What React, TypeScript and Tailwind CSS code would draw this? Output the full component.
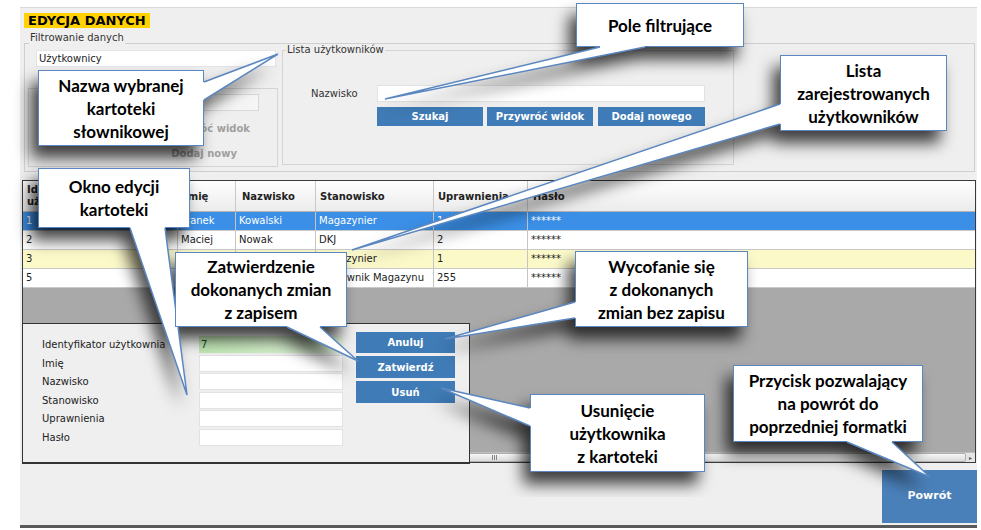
import React from 'react';

type Pt = [number, number];

interface Callout {
  lines: string[];
  box: string;
  rect: [number, number, number, number];
  tail: [Pt, Pt, Pt];
  inward: Pt;
}

const callouts: Callout[] = [
  {
    lines: ['Pole filtrujące'],
    box: 'left-[576px] top-[3px] w-[168px] h-[44px]',
    rect: [576, 3, 168, 44],
    tail: [[600, 47], [385, 99], [645, 47]],
    inward: [0, -1],
  },
  {
    lines: ['Lista', 'zarejestrowanych', 'użytkowników'],
    box: 'left-[780px] top-[55px] w-[167px] h-[76px]',
    rect: [780, 55, 167, 76],
    tail: [[780, 104], [352, 250], [780, 124]],
    inward: [1, 0],
  },
  {
    lines: ['Nazwa wybranej', 'kartoteki', 'słownikowej'],
    box: 'left-[38px] top-[70px] w-[166px] h-[76px]',
    rect: [38, 70, 166, 76],
    tail: [[204, 82], [278, 54], [204, 100]],
    inward: [-1, 0],
  },
  {
    lines: ['Okno edycji', 'kartoteki'],
    box: 'left-[38px] top-[168px] w-[152px] h-[60px]',
    rect: [38, 168, 152, 60],
    tail: [[130, 228], [187, 395], [165, 228]],
    inward: [0, -1],
  },
  {
    lines: ['Zatwierdzenie', 'dokonanych zmian', 'z zapisem'],
    box: 'left-[175px] top-[252px] w-[172px] h-[75px]',
    rect: [175, 252, 172, 75],
    tail: [[287, 327], [358, 361], [320, 327]],
    inward: [0, -1],
  },
  {
    lines: ['Wycofanie się', 'z dokonanych', 'zmian bez zapisu'],
    box: 'left-[575px] top-[251px] w-[173px] h-[76px]',
    rect: [575, 251, 173, 76],
    tail: [[575, 302], [445, 339], [575, 318]],
    inward: [1, 0],
  },
  {
    lines: ['Usunięcie', 'użytkownika', 'z kartoteki'],
    box: 'left-[530px] top-[394px] w-[175px] h-[78px]',
    rect: [530, 394, 175, 78],
    tail: [[530, 408], [441, 388], [530, 426]],
    inward: [1, 0],
  },
  {
    lines: ['Przycisk pozwalający', 'na powrót do', 'poprzedniej formatki'],
    box: 'left-[733px] top-[365px] w-[190px] h-[77px]',
    rect: [733, 365, 190, 77],
    tail: [[847, 442], [930, 477], [892, 442]],
    inward: [0, -1],
  },
];

const rows = [
  { id: '1', imie: 'Franek', nazwisko: 'Kowalski', stan: 'Magazynier', upr: '1', kind: 'sel' },
  { id: '2', imie: 'Maciej', nazwisko: 'Nowak', stan: 'DKJ', upr: '2', kind: 'white' },
  { id: '3', imie: 'Jan', nazwisko: 'Kowal', stan: 'Magazynier', upr: '1', kind: 'yellow' },
  { id: '5', imie: 'Adam', nazwisko: 'Wiśniewski', stan: 'Pracownik Magazynu', upr: '255', kind: 'white' },
];

const formFields = ['Identyfikator użytkownia', 'Imię', 'Nazwisko', 'Stanowisko', 'Uprawnienia', 'Hasło'];

const pts = (p: Pt[]) => p.map((x) => x.join(',')).join(' ');

// white wedge that also covers the box border where the tail joins it
function tailFill(c: Callout) {
  const [a, tip, b] = c.tail;
  const [dx, dy] = c.inward;
  const a2: Pt = [a[0] + dx * 3, a[1] + dy * 3];
  const b2: Pt = [b[0] + dx * 3, b[1] + dy * 3];
  return pts([a2, a, tip, b, b2]);
}

function BlueButton({ label, className }: { label: string; className: string }) {
  return (
    <div
      className={`flex items-center justify-center bg-[#3f7bb6] text-white text-[10px] font-bold ${className}`}
    >
      {label}
    </div>
  );
}

function Annotations() {
  return (
    <div className="absolute inset-0 pointer-events-none">
      {/* soft shadows of the callouts */}
      <svg className="absolute inset-0" width={981} height={530}>
        <defs>
          <filter id="calloutShadow" x="-15%" y="-15%" width="130%" height="130%">
            <feGaussianBlur stdDeviation="8" />
          </filter>
        </defs>
        {callouts.map((c, i) => (
          <g key={i} transform="translate(-7 12)" filter="url(#calloutShadow)">
            <rect x={c.rect[0]} y={c.rect[1]} width={c.rect[2]} height={c.rect[3]} fill="#000000" fillOpacity={0.75} />
            <polygon points={pts(c.tail)} fill="#000000" fillOpacity={0.7} />
          </g>
        ))}
      </svg>

      {callouts.map((c, i) => (
        <React.Fragment key={i}>
          <div
            className={`absolute ${c.box} bg-white border-[1.5px] border-[#5b87c0] flex flex-col items-center justify-center font-['Lato',sans-serif] font-bold text-[17px] leading-[23px] text-black`}
          >
            {c.lines.map((l) => (
              <span key={l} className="whitespace-nowrap">
                {l}
              </span>
            ))}
          </div>
          <svg className="absolute inset-0" width={981} height={530}>
            <polygon points={tailFill(c)} fill="white" />
            <polyline
              points={pts(c.tail)}
              fill="none"
              stroke="#5b87c0"
              strokeWidth={1.5}
              strokeLinejoin="miter"
            />
          </svg>
        </React.Fragment>
      ))}
    </div>
  );
}

function UsersTable() {
  const cols = [
    'w-[155px]',
    'w-[58px]',
    'w-[80px]',
    'w-[118px]',
    'w-[94px]',
    'flex-1',
  ];
  return (
    <div className="relative ml-[2px] mt-[8px] w-[954px] h-[283px] border border-[#3a3a3a] flex flex-col bg-[#a9a9a9]">
      {/* header */}
      <div className="flex h-[31px] bg-gradient-to-b from-white to-[#ebebeb] border-b border-[#b4b4b4] text-[10px] font-bold text-[#222]">
        <div className={`${cols[0]} flex flex-col justify-center pl-[4px] leading-[12px] border-r border-[#c8c8c8]`}>
          <span>Identyfikator</span>
          <span>użytkownika</span>
        </div>
        <div className={`${cols[1]} flex items-center pl-[6px] border-r border-[#c8c8c8]`}>Imię</div>
        <div className={`${cols[2]} flex items-center pl-[6px] border-r border-[#c8c8c8]`}>Nazwisko</div>
        <div className={`${cols[3]} flex items-center pl-[4px] border-r border-[#c8c8c8]`}>Stanowisko</div>
        <div className={`${cols[4]} flex items-center pl-[4px] border-r border-[#c8c8c8] whitespace-nowrap overflow-hidden`}>
          Uprawnienia
        </div>
        <div className={`${cols[5]} flex items-center pl-[5px]`}>Hasło</div>
      </div>

      {/* rows */}
      {rows.map((r) => {
        const bg =
          r.kind === 'sel'
            ? 'bg-[#3b8fe6] text-white'
            : r.kind === 'yellow'
              ? 'bg-[#fcf9c9] text-[#222]'
              : 'bg-white text-[#222]';
        const cells = [r.id, r.imie, r.nazwisko, r.stan, r.upr, '******'];
        return (
          <div key={r.id} className={`flex h-[19px] border-b border-[#c9c9c9] text-[10px] leading-[18px] ${bg}`}>
            {cells.map((v, i) => (
              <div
                key={i}
                className={`${cols[i]} pl-[3px] whitespace-nowrap overflow-hidden ${i < 5 ? 'border-r border-[#c4c4c4]' : ''}`}
              >
                {v}
              </div>
            ))}
          </div>
        );
      })}

      <div className="flex-1" />

      {/* horizontal scrollbar */}
      <div className="flex h-[10px] bg-[#e4e4e4] border-t border-[#bdbdbd]">
        <div className="flex-1 flex items-center justify-center bg-gradient-to-b from-[#f7f7f7] to-[#dadada] border border-[#b0b0b0] rounded-[2px]">
          <div className="flex gap-[1px]">
            <div className="w-[1px] h-[5px] bg-[#888]" />
            <div className="w-[1px] h-[5px] bg-[#888]" />
            <div className="w-[1px] h-[5px] bg-[#888]" />
          </div>
        </div>
        <div className="w-[9px] flex items-center justify-center text-[6px] text-[#555]">▸</div>
      </div>

      {/* edit form window lying over the table */}
      <div className="absolute left-[-1px] top-[142px] w-[448px] h-[141px] bg-[#efefef] border border-b-2 border-[#333] flex items-start">
        <div className="pl-[19px] pt-[12px] flex flex-col gap-[1.5px]">
          {formFields.map((f, i) => (
            <div key={f} className="flex items-center h-[17px]">
              <div className="w-[157px] text-[10px] text-[#222] whitespace-nowrap">{f}</div>
              {i === 0 ? (
                <div className="w-[144px] h-[17px] bg-gradient-to-r from-[#bfe6b3] to-[#e3f4dd] text-[10px] leading-[17px] pl-[2px] text-[#234523]">
                  7
                </div>
              ) : (
                <div className="w-[144px] h-[17px] bg-white border border-[#e2e2e2]" />
              )}
            </div>
          ))}
        </div>
        <div className="ml-[13px] pt-[8px] flex flex-col gap-[3px]">
          <BlueButton label="Anuluj" className="w-[99px] h-[21px]" />
          <BlueButton label="Zatwierdź" className="w-[99px] h-[22px]" />
          <BlueButton label="Usuń" className="w-[99px] h-[22px]" />
        </div>
      </div>
    </div>
  );
}

export default function App() {
  return (
    <div className="relative w-[981px] h-[530px] bg-white overflow-hidden font-['DejaVu_Sans',sans-serif]">
      <div className="ml-[20px] mt-[7px] w-[957px] h-[521px] bg-[#efefef] border-t border-[#d9d9d9] border-b-[3px] border-b-[#5a5a5a] flex flex-col">
        <div className="ml-[4px] mt-[5px] self-start bg-[#ffd200] px-[4px] h-[15px] text-[13px] leading-[15px] font-bold text-black">
          EDYCJA DANYCH
        </div>

        {/* Filtrowanie danych */}
        <fieldset className="ml-[4px] mt-[4px] w-[951px] border border-[#cfcfcf] pb-[4px]">
          <legend className="ml-[4px] px-[1px] text-[10px] leading-[12px] pb-[10px] text-[#333]">
            Filtrowanie danych
          </legend>
          <div className="-mt-[10px] flex items-start">
            <div className="ml-[3px] w-[250px] flex flex-col">
              <div className="ml-[8px] mt-[6px] w-[240px] h-[17px] bg-white border border-[#e4e4e4] pl-[2px] text-[10px] leading-[15px] text-[#222]">
                Użytkownicy
              </div>
              <div className="mt-[21px] h-[79px] border border-[#d4d4d4] flex flex-col">
                <div className="ml-[171px] mt-[5px] w-[59px] h-[17px] bg-[#f5f5f5] border border-[#d9d9d9]" />
                <div className="self-end mr-[27px] mt-[12px] text-[10px] leading-[12px] font-bold text-[#a0a0a0] whitespace-nowrap">
                  Przywróć widok
                </div>
                <div className="self-end mr-[40px] mt-[13px] text-[10px] leading-[12px] font-bold text-[#a0a0a0] whitespace-nowrap">
                  Dodaj nowy
                </div>
              </div>
            </div>

            <fieldset className="ml-[4px] w-[452px] border border-[#d4d4d4] pb-[38px]">
              <legend className="ml-[3px] px-[1px] text-[10px] leading-[12px] text-[#333]">
                Lista użytkowników
              </legend>
              <div className="mt-[29px] flex items-center">
                <div className="ml-[28px] w-[66px] text-[10px] text-[#333]">Nazwisko</div>
                <div className="w-[328px] h-[17px] bg-white border border-[#e2e2e2]" />
              </div>
              <div className="mt-[5px] ml-[94px] flex">
                <BlueButton label="Szukaj" className="w-[106px] h-[19px]" />
                <BlueButton label="Przywróć widok" className="ml-[4px] w-[106px] h-[19px]" />
                <BlueButton label="Dodaj nowego" className="ml-[5px] w-[107px] h-[19px]" />
              </div>
            </fieldset>
          </div>
        </fieldset>

        <UsersTable />

        <div className="self-end mt-[7px] w-[95px] h-[53px] bg-[#4a80b9] flex items-center justify-center text-white text-[11px] font-bold">
          Powrót
        </div>
      </div>

      <Annotations />
    </div>
  );
}
